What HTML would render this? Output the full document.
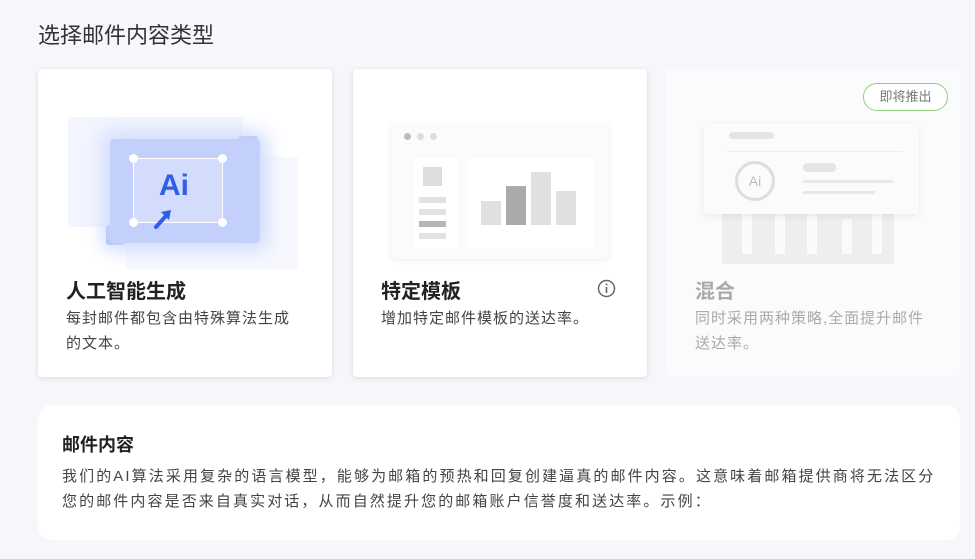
<!DOCTYPE html>
<html><head><meta charset="utf-8"><style>
*{margin:0;padding:0;box-sizing:border-box}
body{width:975px;height:559px;background:#f6f7fb;font-family:"Liberation Sans","Noto Sans CJK SC",sans-serif;position:relative;overflow:hidden;color:#222}
.t{position:absolute;left:38px;top:18px;font-size:22px;color:#333}
.card{position:absolute;top:69px;width:294px;height:308px;background:#fff;border-radius:4px;box-shadow:0 1px 6px rgba(0,0,0,.12)}
.card h3{position:absolute;left:28px;top:206px;font-size:20px;font-weight:bold;color:#222}
.card p{position:absolute;left:28px;top:237px;width:230px;font-size:15px;letter-spacing:1px;line-height:25px;color:#444}
.abs{position:absolute}
.bot{position:absolute;left:38px;top:405px;width:922px;height:135px;background:#fff;border-radius:14px}
.bot h4{position:absolute;left:24px;top:26px;font-size:18px;font-weight:bold;color:#222}
.bot p{position:absolute;left:24px;top:59px;font-size:15px;letter-spacing:2.1px;line-height:25px;color:#444;white-space:nowrap}
</style></head><body>
<div class="t">选择邮件内容类型</div>

<div class="card" style="left:38px">
  <div class="abs" style="left:30px;top:48px;width:175px;height:110px;background:#f3f5fe"></div>
  <div class="abs" style="left:88px;top:88px;width:172px;height:112px;background:#f7f8fe"></div>
  <div class="abs" style="left:68px;top:156px;width:20px;height:20px;background:#8fa8f5;border-radius:3px"></div>
  <div class="abs" style="left:200px;top:67px;width:20px;height:22px;background:#8fa8f5;border-radius:3px"></div>
  <div class="abs" style="left:72px;top:70px;width:150px;height:104px;background:#c4d0fc;box-shadow:0 0 18px 8px #d3dcfd;border-radius:4px"></div>
  <div class="abs" style="left:95px;top:89px;width:90px;height:65px;border:1.5px solid #fff;background:#d3dcfd"></div>
  <div class="abs" style="left:91px;top:85px;width:9px;height:9px;border-radius:50%;background:#fff"></div>
  <div class="abs" style="left:180px;top:85px;width:9px;height:9px;border-radius:50%;background:#fff"></div>
  <div class="abs" style="left:91px;top:149px;width:9px;height:9px;border-radius:50%;background:#fff"></div>
  <div class="abs" style="left:180px;top:149px;width:9px;height:9px;border-radius:50%;background:#fff"></div>
  <div class="abs" style="left:121px;top:100px;font-size:30px;font-weight:bold;color:#2f5ee8">Ai</div>
  <svg class="abs" style="left:114px;top:136px" width="24" height="26" viewBox="0 0 24 26"><path d="M4 22 L13 12" stroke="#2f5ee8" stroke-width="4" stroke-linecap="round"/><path d="M9 7 L19 5 L17 15 Z" fill="#2f5ee8"/></svg>
  <h3>人工智能生成</h3>
  <p>每封邮件都包含由特殊算法生成的文本。</p>
</div>

<div class="card" style="left:353px">
  <div class="abs" style="left:38px;top:56px;width:218px;height:134px;background:#fbfbfb;box-shadow:0 1px 6px rgba(0,0,0,.08);border-radius:3px"></div>
  <div class="abs" style="left:51px;top:64px;width:7px;height:7px;border-radius:50%;background:#bbb"></div>
  <div class="abs" style="left:64px;top:64px;width:7px;height:7px;border-radius:50%;background:#ddd"></div>
  <div class="abs" style="left:77px;top:64px;width:7px;height:7px;border-radius:50%;background:#ddd"></div>
  <div class="abs" style="left:60px;top:89px;width:45px;height:91px;background:#fff"></div>
  <div class="abs" style="left:115px;top:89px;width:125px;height:91px;background:#fff"></div>
  <div class="abs" style="left:70px;top:98px;width:19px;height:19px;background:#ddd"></div>
  <div class="abs" style="left:66px;top:128px;width:27px;height:6px;background:#e2e2e2"></div>
  <div class="abs" style="left:66px;top:140px;width:27px;height:6px;background:#e2e2e2"></div>
  <div class="abs" style="left:66px;top:152px;width:27px;height:6px;background:#b5b5b5"></div>
  <div class="abs" style="left:66px;top:164px;width:27px;height:6px;background:#e2e2e2"></div>
  <div class="abs" style="left:128px;top:132px;width:20px;height:24px;background:#e0e0e0"></div>
  <div class="abs" style="left:153px;top:117px;width:20px;height:39px;background:#aaa"></div>
  <div class="abs" style="left:178px;top:103px;width:20px;height:53px;background:#e0e0e0"></div>
  <div class="abs" style="left:203px;top:122px;width:20px;height:34px;background:#e0e0e0"></div>
  <svg class="abs" style="left:244px;top:210px" width="19" height="19" viewBox="0 0 19 19"><circle cx="9.5" cy="9.5" r="8" fill="none" stroke="#666" stroke-width="1.5"/><rect x="8.7" y="8" width="1.6" height="6" fill="#666"/><circle cx="9.5" cy="5.5" r="1" fill="#666"/></svg>
  <h3>特定模板</h3>
  <p>增加特定邮件模板的送达率。</p>
</div>

<div class="card" style="left:667px;box-shadow:none;background:#fafbfd;width:293px">
  <div class="abs" style="left:196px;top:14px;width:85px;height:28px;border:1.5px solid #8fd07a;border-radius:14px;background:#fff;font-size:13px;color:#777;text-align:center;line-height:25px">即将推出</div>
  <div class="abs" style="left:55px;top:125px;width:172px;height:70px;background:#eee;border-radius:3px"></div>
  <div class="abs" style="left:75px;top:140px;width:10px;height:45px;background:#fafafa"></div>
  <div class="abs" style="left:108px;top:142px;width:10px;height:43px;background:#fafafa"></div>
  <div class="abs" style="left:140px;top:140px;width:10px;height:45px;background:#fafafa"></div>
  <div class="abs" style="left:175px;top:150px;width:10px;height:35px;background:#fafafa"></div>
  <div class="abs" style="left:205px;top:140px;width:10px;height:45px;background:#fafafa"></div>
  <div class="abs" style="left:37px;top:55px;width:215px;height:90px;background:#fbfbfb;box-shadow:0 2px 8px rgba(0,0,0,.07);border-radius:3px"></div>
  <div class="abs" style="left:62px;top:63px;width:45px;height:7px;background:#e5e5e5;border-radius:4px"></div>
  <div class="abs" style="left:60px;top:82px;width:175px;height:1px;background:#eee"></div>
  <div class="abs" style="left:68px;top:92px;width:40px;height:40px;border-radius:50%;border:3px solid #ddd;text-align:center;line-height:34px;font-size:14px;color:#bbb">Ai</div>
  <div class="abs" style="left:136px;top:94px;width:33px;height:9px;background:#e5e5e5;border-radius:4px"></div>
  <div class="abs" style="left:136px;top:111px;width:90px;height:3px;background:#e8e8e8"></div>
  <div class="abs" style="left:136px;top:122px;width:72px;height:3px;background:#e8e8e8"></div>
  <h3 style="color:#aaa">混合</h3>
  <p style="color:#aaa;width:245px">同时采用两种策略,全面提升邮件送达率。</p>
</div>

<div class="bot">
  <h4>邮件内容</h4>
  <p>我们的AI算法采用复杂的语言模型，能够为邮箱的预热和回复创建逼真的邮件内容。这意味着邮箱提供商将无法区分<br>您的邮件内容是否来自真实对话，从而自然提升您的邮箱账户信誉度和送达率。示例：</p>
</div>
</body></html>
